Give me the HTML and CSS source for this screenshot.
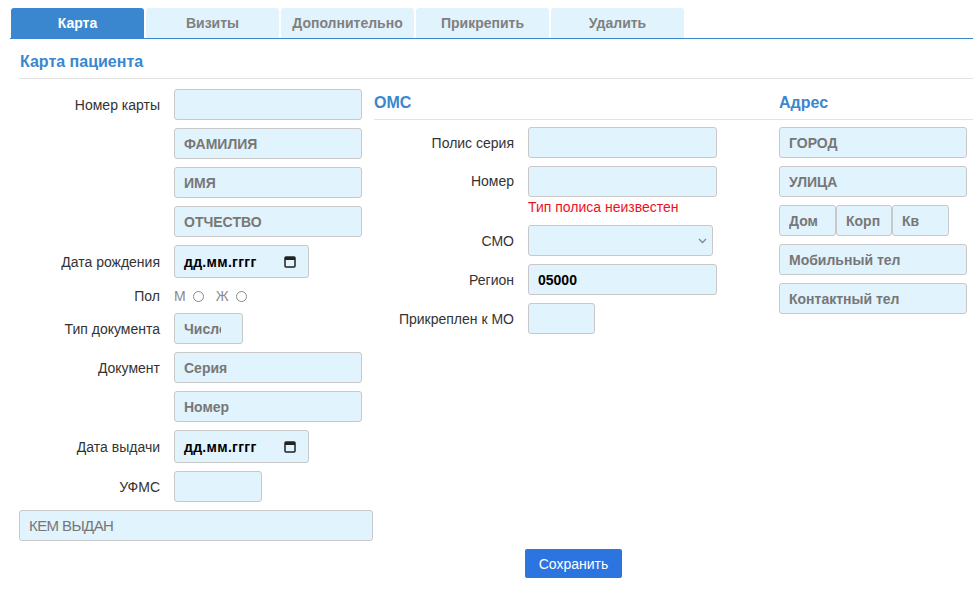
FILE: index.html
```html
<!DOCTYPE html>
<html lang="ru">
<head>
<meta charset="utf-8">
<title>Карта пациента</title>
<link rel="stylesheet" href="styles.css">
</head>
<body>
<div class="page">
  <nav class="tabs">
    <div class="tab active">Карта</div>
    <div class="tab">Визиты</div>
    <div class="tab">Дополнительно</div>
    <div class="tab">Прикрепить</div>
    <div class="tab">Удалить</div>
  </nav>
  <section class="card">
    <h2 class="card-title">Карта пациента</h2>
    <div class="form-grid">
      <div class="col-left">
        <div class="row"><label class="lbl">Номер карты</label><input class="field w188" type="text"></div>
        <div class="row indent"><input class="field w188" type="text" placeholder="ФАМИЛИЯ"></div>
        <div class="row indent"><input class="field w188" type="text" placeholder="ИМЯ"></div>
        <div class="row indent"><input class="field w188" type="text" placeholder="ОТЧЕСТВО"></div>
        <div class="row"><label class="lbl">Дата рождения</label>
          <div class="field date"><span>дд.мм.гггг</span>
            <svg class="cal" width="12" height="13" viewBox="0 0 12 13"><rect x="1" y="2" width="10" height="10" rx="1" fill="none" stroke="#222" stroke-width="1.5"/><rect x="1" y="2" width="10" height="3" fill="#222"/></svg>
          </div>
        </div>
        <div class="row sex"><label class="lbl">Пол</label>
          <span class="sex-opt">М<input type="radio" name="sex" class="radio"></span>
          <span class="sex-opt">Ж<input type="radio" name="sex" class="radio"></span>
        </div>
        <div class="row"><label class="lbl">Тип документа</label><input class="field w69" type="text" placeholder="Число"></div>
        <div class="row"><label class="lbl">Документ</label><input class="field w188" type="text" placeholder="Серия"></div>
        <div class="row indent"><input class="field w188" type="text" placeholder="Номер"></div>
        <div class="row"><label class="lbl">Дата выдачи</label>
          <div class="field date"><span>дд.мм.гггг</span>
            <svg class="cal" width="12" height="13" viewBox="0 0 12 13"><rect x="1" y="2" width="10" height="10" rx="1" fill="none" stroke="#222" stroke-width="1.5"/><rect x="1" y="2" width="10" height="3" fill="#222"/></svg>
          </div>
        </div>
        <div class="row"><label class="lbl">УФМС</label><input class="field w88" type="text"></div>
        <div class="row"><input class="field kem" type="text" placeholder="КЕМ ВЫДАН"></div>
      </div>

      <h3 class="head head-oms">ОМС</h3>
      <h3 class="head head-addr">Адрес</h3>

      <div class="col-oms">
        <div class="row"><label class="lbl lbl-oms">Полис серия</label><input class="field w189" type="text"></div>
        <div class="row top"><label class="lbl lbl-oms tall">Номер</label>
          <div class="stack"><input class="field w189" type="text"><div class="err">Тип полиса неизвестен</div></div>
        </div>
        <div class="row"><label class="lbl lbl-oms">СМО</label>
          <div class="field select"><svg class="chev" width="9" height="6" viewBox="0 0 9 6"><path d="M1 1l3.5 3.5L8 1" fill="none" stroke="#888" stroke-width="1.4"/></svg></div>
        </div>
        <div class="row"><label class="lbl lbl-oms">Регион</label><input class="field w189" type="text" value="05000"></div>
        <div class="row"><label class="lbl lbl-oms">Прикреплен к МО</label><input class="field w67" type="text"></div>
      </div>

      <div class="col-addr">
        <div class="row"><input class="field w188" type="text" placeholder="ГОРОД"></div>
        <div class="row"><input class="field w188" type="text" placeholder="УЛИЦА"></div>
        <div class="row house">
          <input class="field w57" type="text" placeholder="Дом">
          <input class="field w56" type="text" placeholder="Корп">
          <input class="field w57" type="text" placeholder="Кв">
        </div>
        <div class="row"><input class="field w188" type="text" placeholder="Мобильный тел"></div>
        <div class="row"><input class="field w188" type="text" placeholder="Контактный тел"></div>
      </div>

      <div class="actions"><button class="save" type="button">Сохранить</button></div>
    </div>
  </section>
</div>
</body>
</html>
```
FILE: styles.css
```css
* { box-sizing: border-box; }

body {
  margin: 0;
  background: #fff;
  color: #333;
  font-family: "Liberation Sans", Arial, sans-serif;
  font-size: 14px;
}

.page { padding: 8px 0 0 10px; }

.tabs {
  display: flex;
  gap: 2px;
  padding-left: 1px;
  border-bottom: 1px solid #3a87d0;
}

.tab {
  width: 133px;
  height: 30px;
  display: flex;
  align-items: center;
  justify-content: center;
  background: #e1f3fd;
  color: #808080;
  font-weight: bold;
  border-radius: 3px 3px 0 0;
}

.tab.active { background: #3a87d0; color: #fff; }

.card { margin-left: 9px; }

.card-title {
  margin: 0;
  padding: 14px 0 7px 1px;
  font-size: 16px;
  line-height: 18px;
  color: #3a87d0;
  border-bottom: 1px solid #e2e2e2;
}

.form-grid {
  display: grid;
  grid-template-columns: 355px 399px 1fr;
  grid-template-rows: 31px auto auto;
  margin-top: 10px;
}

.col-left { grid-column: 1; grid-row: 1 / 3; }

.head {
  margin: 0;
  padding: 5px 0 7px;
  font-size: 16px;
  line-height: 18px;
  color: #3a87d0;
  border-bottom: 1px solid #e2e2e2;
}
.head-oms { grid-column: 2; grid-row: 1; }
.head-addr { grid-column: 3; grid-row: 1; padding-left: 6px; }

.col-oms { grid-column: 2; grid-row: 2; padding-top: 7px; }
.col-addr { grid-column: 3; grid-row: 2; padding: 7px 0 0 6px; }

.row {
  display: flex;
  align-items: center;
  margin-bottom: 8px;
}
.row.top { align-items: flex-start; }
.row.indent { padding-left: 155px; }
.row.sex { height: 19px; }

.lbl {
  width: 141px;
  margin-right: 14px;
  flex-shrink: 0;
  text-align: right;
  color: #333;
}
.lbl-oms { width: 140px; }
.lbl.tall { line-height: 31px; }

.field {
  height: 31px;
  border: 1px solid #c8c8c8;
  border-radius: 3px;
  background: #e1f3fd;
  padding: 0 9px;
  font-family: "Liberation Sans", Arial, sans-serif;
  font-size: 14px;
  font-weight: bold;
  color: #000;
  outline: none;
}
.field::placeholder { color: #777; opacity: 1; }

.w188 { width: 188px; }
.w189 { width: 189px; }
.w88 { width: 88px; }
.w67 { width: 67px; }
.w69 { width: 69px; padding-right: 21px; }
.w57 { width: 57px; }
.w56 { width: 56px; }

.house { gap: 0; }

.date {
  width: 135px;
  height: 33px;
  display: flex;
  align-items: center;
  justify-content: space-between;
  padding-right: 12px;
  letter-spacing: 0.3px;
}
.cal { display: block; }

.select {
  width: 185px;
  display: flex;
  align-items: center;
  justify-content: flex-end;
  padding-right: 5px;
}
.chev { display: block; }

.sex-opt {
  display: inline-flex;
  align-items: center;
  color: #8a8a8a;
  margin-right: 12px;
}
.radio {
  appearance: none;
  -webkit-appearance: none;
  width: 11px;
  height: 11px;
  margin: 1px 0 0 7px;
  border: 1px solid #8a8a8a;
  border-radius: 50%;
  background: #fff;
}

.stack { display: flex; flex-direction: column; }
.err {
  color: #ee1122;
  line-height: 19px;
  margin-top: 1px;
}

.kem {
  width: 354px;
  font-weight: normal;
  font-size: 15px;
  letter-spacing: -0.6px;
}

.actions {
  grid-column: 2;
  grid-row: 3;
  justify-self: center;
}
.save {
  display: block;
  width: 97px;
  height: 29px;
  border: 0;
  border-radius: 2px;
  background: #2c74e0;
  color: #fff;
  font-family: "Liberation Sans", Arial, sans-serif;
  font-size: 14px;
}
```
